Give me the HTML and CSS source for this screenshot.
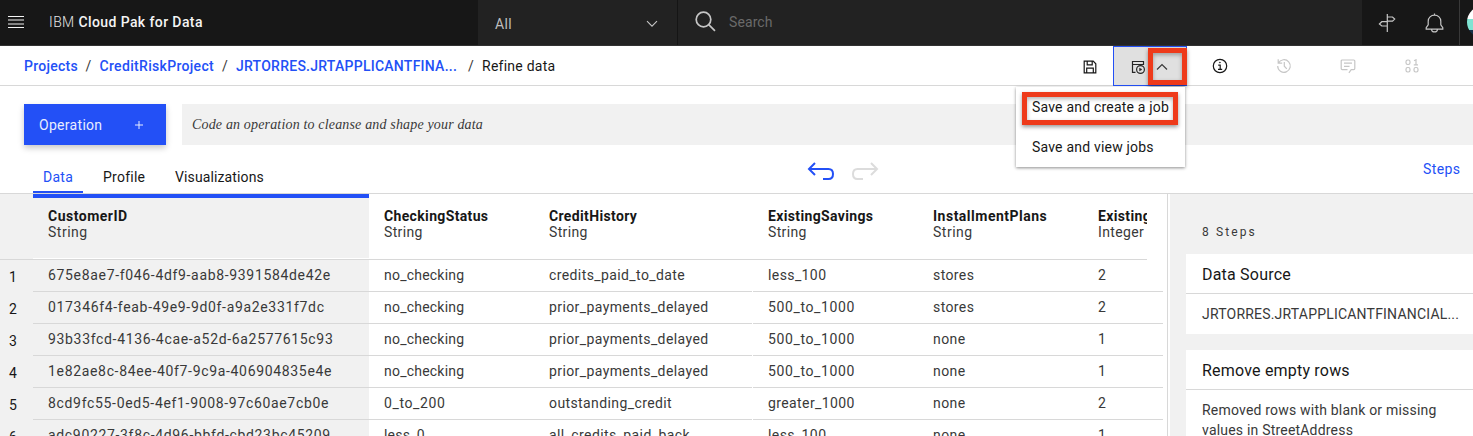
FILE: index.html
```html
<!DOCTYPE html>
<html lang="en">
<head>
<meta charset="utf-8">
<title>Refine data</title>
<link rel="stylesheet" href="styles.css">
</head>
<body>
<header class="topbar">
  <div class="brand">
    <svg class="burger" width="16" height="12" viewBox="0 0 16 12"><path d="M0 .5h16M0 11.5h16" stroke="#f4f4f4"/><path d="M0 4h16M0 8h16" stroke="#a8a8a8" stroke-width="1.4"/></svg>
    <span class="brand-name">IBM <b>Cloud Pak for Data</b></span>
  </div>
  <div class="scope">
    <span class="scope-label">All</span>
    <svg width="12" height="8" viewBox="0 0 12 8" fill="none" stroke="#c6c6c6" stroke-width="1.1"><path d="M1 1.2l5 5 5-5"/></svg>
  </div>
  <div class="search">
    <svg width="21" height="21" viewBox="0 0 21 21" fill="none" stroke="#c6c6c6" stroke-width="1.7"><circle cx="8.5" cy="8.5" r="7.3"/><path d="M13.7 13.7l6.3 6.1"/></svg>
    <span class="search-hint">Search</span>
  </div>
  <div class="tools">
    <svg width="18" height="20" viewBox="0 0 18 20" fill="none" stroke="#c6c6c6" stroke-width="1.2"><path d="M9.3 1v18M9.3 4h5.2l2.2 2.1-2.2 2.1H9.3M9.3 8.7H3.8L1.4 11l2.4 2h5.5"/></svg>
    <svg width="19" height="20" viewBox="0 0 19 20" fill="none" stroke="#c6c6c6" stroke-width="1.2"><path d="M1.2 16.2v-1.6l2-2.8V8.2c0-3.6 2.8-6 6.3-6s6.3 2.4 6.3 6v3.6l2 2.8v1.6zM9.5 2.2V.5M6.600 16.400a2.900 2.500 0 0 0 5.800 0"/></svg>
  </div>
  <div class="account"><span class="avatar"></span></div>
</header>

<nav class="crumbs">
  <div class="trail">
    <a class="c1">Projects</a><i>/</i><a class="c2">CreditRiskProject</a><i>/</i><a class="c3">JRTORRES.JRTAPPLICANTFINA...</a><i class="last">/</i><span class="here">Refine data</span>
  </div>
  <div class="actions">
    <svg class="save" width="14" height="14" viewBox="0 0 14 14" fill="none" stroke="#171717" stroke-width="1.2"><path d="M1.200 1.200h9l2.600 2.600v9H1.200zM4.200 1.200v3.600h5V1.200M3.700 12.800V8.200h6.600v4.600"/></svg>
    <div class="run">
      <svg width="14" height="14" viewBox="0 0 14 14" fill="none" stroke="#262626" stroke-width="1.2"><path d="M4.500 12.400H1.500V1.500h11v3.500M1.500 4.500h11"/><circle cx="9.500" cy="9.500" r="3.900"/><path d="M8.500 8v3l2.500-1.500z" fill="#262626" stroke-width=".4"/></svg>
      <div class="caret mark">
        <svg width="12" height="8" viewBox="0 0 12 8" fill="none" stroke="#393939" stroke-width="1.2"><path d="M1 6.500l5-5 5 5"/></svg>
      </div>
      <div class="menu">
        <div class="menu-item mark"><span>Save and create a job</span></div>
        <div class="menu-item"><span>Save and view jobs</span></div>
      </div>
    </div>
    <svg class="info" width="16" height="16" viewBox="0 0 16 16" fill="none" stroke="#171717" stroke-width="1.2"><circle cx="8" cy="8" r="6.700"/><path d="M6.200 7.200h2v4M6 11.400h4.200"/><circle cx="7.900" cy="4.500" r=".5" fill="#171717" stroke-width=".6"/></svg>
    <svg class="history" width="16" height="16" viewBox="0 0 16 16" fill="none" stroke="#c6c6c6" stroke-width="1.2"><path d="M2.200 1.200v4h4M2.400 5.100A6.300 6.300 0 1 1 1.700 8M8.300 4v4.200l2.500 2.700"/></svg>
    <svg class="comment" width="16" height="16" viewBox="0 0 16 16" fill="none" stroke="#c6c6c6" stroke-width="1.2"><path d="M7.500 11.600H2.200a1 1 0 0 1-1-1V3a1 1 0 0 1 1-1h11.600a1 1 0 0 1 1 1v7.600a1 1 0 0 1-1 1h-2.600l-2.300 3.200M4 5.200h8M4 8.300h5.500"/></svg>
    <svg class="bits" width="14" height="14" viewBox="0 0 14 14" fill="none" stroke="#c6c6c6" stroke-width="1.2"><rect x="1" y="1" width="4" height="4.500" rx="1.700"/><path d="M9 1.800l2-1v5M8.800 5.800H13"/><rect x="1" y="8.500" width="4" height="4.500" rx="1.700"/><rect x="9" y="8.500" width="4" height="4.500" rx="1.700"/></svg>
  </div>
</nav>

<section class="command">
  <button class="operation"><span>Operation</span><svg width="8" height="8" viewBox="0 0 8 8" stroke="#e8edff"><path d="M4 0v8M0 4h8"/></svg></button>
  <div class="code">Code an operation to cleanse and shape your data</div>
</section>

<section class="tabs">
  <span class="tab active">Data</span><span class="tab profile">Profile</span><span class="tab visual">Visualizations</span>
  <div class="undo">
    <svg width="28" height="19" viewBox="0 0 28 19" fill="none" stroke="#2350f6" stroke-width="2"><path d="M8 1L2 7l6 6M2 7h19.500q4.500 0 4.500 5t-4.500 5H16"/></svg>
    <svg width="28" height="19" viewBox="0 0 28 19" fill="none" stroke="#dcdcdc" stroke-width="2"><path d="M20 1l6 6-6 6M26 7H6.500Q2 7 2 12t4.500 5H12"/></svg>
  </div>
  <span class="steps-link">Steps</span>
</section>

<main class="work">
  <div class="grid">
    <div class="nums"><div class="corner"></div><div>1</div><div>2</div><div>3</div><div>4</div><div>5</div><div>6</div></div>
    <div class="col customer"><div class="head"><b>CustomerID</b><em>String</em></div><div>675e8ae7-f046-4df9-aab8-9391584de42e</div><div>017346f4-feab-49e9-9d0f-a9a2e331f7dc</div><div>93b33fcd-4136-4cae-a52d-6a2577615c93</div><div>1e82ae8c-84ee-40f7-9c9a-406904835e4e</div><div>8cd9fc55-0ed5-4ef1-9008-97c60ae7cb0e</div><div>adc90227-3f8c-4d96-bbfd-cbd23bc45209</div></div>
    <div class="col checking"><div class="head"><b>CheckingStatus</b><em>String</em></div><div>no_checking</div><div>no_checking</div><div>no_checking</div><div>no_checking</div><div class="digits">0_to_200</div><div>less_0</div></div>
    <div class="col credit"><div class="head"><b>CreditHistory</b><em>String</em></div><div>credits_paid_to_date</div><div>prior_payments_delayed</div><div>prior_payments_delayed</div><div>prior_payments_delayed</div><div>outstanding_credit</div><div>all_credits_paid_back</div></div>
    <div class="col savings"><div class="head"><b>ExistingSavings</b><em>String</em></div><div>less_100</div><div class="digits">500_to_1000</div><div class="digits">500_to_1000</div><div class="digits">500_to_1000</div><div>greater_1000</div><div>less_100</div></div>
    <div class="col plans"><div class="head"><b>InstallmentPlans</b><em>String</em></div><div>stores</div><div>stores</div><div>none</div><div>none</div><div>none</div><div>none</div></div>
    <div class="col existing"><div class="head"><b>Existing</b><em>Integer</em></div><div>2</div><div>2</div><div>1</div><div>1</div><div>2</div><div>1</div></div>
  </div>
  <aside class="steps">
    <div class="count">8 Steps</div>
    <div class="card"><h3>Data Source</h3><p>JRTORRES.JRTAPPLICANTFINANCIAL...</p></div>
    <div class="card"><h3>Remove empty rows</h3><p>Removed rows with blank or missing<br>values in StreetAddress</p></div>
  </aside>
</main>
</body>
</html>
```

FILE: styles.css
```css
* { box-sizing: border-box; }
body { margin: 0; width: 1473px; height: 436px; overflow: hidden; display: flex; flex-direction: column; background: #fff; color: #171717; font: 14px/16px Roboto, "Liberation Sans", sans-serif; letter-spacing: .4px; white-space: nowrap; }
svg { display: block; flex: none; }

.topbar { flex: 0 0 46px; display: flex; background: #171717; border-bottom: 1px solid #323232; }
.brand { width: 478px; display: flex; align-items: center; padding: 0 0 1px 8px; gap: 25px; color: #e4e4e4; }
.brand b { font-weight: 500; color: #f4f4f4; }
.brand-name { font-weight: 300; letter-spacing: .4px; }
.scope { width: 199px; display: flex; align-items: center; justify-content: space-between; padding: 2px 19px 0 17px; background: #222; color: #bebebe; }
.search { width: 685px; display: flex; align-items: center; gap: 13px; padding-left: 17px; background: #222; border-left: 1px solid #151515; color: #6a6a6a; letter-spacing: .1px; }
.search svg { margin-top: -2px; }
.search-hint { margin-top: -1px; }
.tools { width: 97px; display: flex; align-items: center; gap: 29px; padding-left: 16px; }
.account { flex: 1; border-left: 1px solid #393939; overflow: hidden; padding: 6px 0 0 7px; }
.avatar { display: block; width: 32px; height: 32px; border-radius: 50%; background: linear-gradient(#fff 42%, #7fe3d2 42% 76%, #16324a 76%); }

.crumbs { flex: 0 0 40px; display: flex; align-items: center; justify-content: space-between; border-bottom: 1px solid #d8d8d8; padding-left: 24px; }
.trail { display: flex; align-items: center; color: #171717; padding-top: 1px; letter-spacing: .25px; }
.trail a { color: #2350f6; font-weight: 500; }
.trail i { font-style: normal; color: #393939; width: 22px; padding-left: 8px; }
.trail .last { width: 25px; padding-left: 11px; }
.c1 { width: 53.5px; }
.c2 { width: 114.5px; letter-spacing: .32px; }
.c3 { width: 221px; }
.actions { display: flex; align-items: center; align-self: stretch; width: 390px; height: 39px; }
.actions > svg { margin-top: 1px; }
.actions > .save { margin-right: 16px; margin-top: 3px; }
.run { position: relative; width: 74px; height: 40px; margin-bottom: -1px; display: flex; align-items: center; justify-content: space-between; padding-left: 17px; background: #e0e0e0; border: 1px solid #2350f6; margin-right: 25px; }
.run > svg { margin-top: 2px; }
.mark { border: 5px solid #ee3a1a; box-shadow: 0 2px 4px rgba(0,0,0,.4), inset 0 2px 4px rgba(0,0,0,.3); }
.caret { width: 39px; height: 37px; margin-right: -1px; display: flex; align-items: center; padding-left: 3px; }
.caret svg { margin-top: 2px; }
.menu { position: absolute; left: -98px; top: 40px; width: 169px; height: 80px; background: #fff; box-shadow: 0 1px 3px rgba(0,0,0,.45); padding: 5px 6px; z-index: 2; letter-spacing: .2px; }
.menu-item { width: 156px; height: 33px; display: flex; align-items: center; padding-left: 10px; }
.menu-item.mark { padding: 0 0 3px 5px; }
.menu-item + .menu-item { margin-top: 5px; }
.history { margin-left: 48px; }
.comment { margin-left: 48px; }
.bits { margin-left: 49px; }

.command { display: flex; gap: 16px; padding: 18px 0 0 24px; height: 77px; flex: none; }
.operation { width: 142px; height: 41px; border: 0; display: flex; align-items: center; justify-content: space-between; padding: 1px 23px 0 15px; background: #2350f6; color: #e8edff; font: inherit; letter-spacing: .3px; box-shadow: 0 3px 6px rgba(0,0,0,.22); }
.code { flex: 1; height: 41px; background: #f1f1f1; padding: 13px 10px; color: #393939; font: italic 14px/16px "Liberation Serif", serif; letter-spacing: .165px; }

.tabs { flex: 0 0 31px; height: 31px; display: flex; padding-left: 33px; border-bottom: 1px solid #d8d8d8; }
.tab { width: 50px; height: 30px; padding: 6px 0 0 10px; letter-spacing: .25px; }
.tab.active { color: #2350f6; border-bottom: 2px solid #2350f6; }
.profile { margin-left: 10px; width: 82px; }
.visual { width: 100px; padding-left: 0; letter-spacing: .12px; }
.undo { display: flex; gap: 16px; margin: -1px 0 0 532px; }
.steps-link { margin: -2px 0 0 544px; color: #2350f6; }

.work { flex: 1; min-height: 0; display: flex; overflow: hidden; }
.grid { width: 1168px; display: flex; border-right: 1px solid #d8d8d8; color: #393939; }
.nums { width: 33px; background: #f1f1f1; color: #171717; }
.nums > div { height: 32px; padding: 9px 0 0 9px; }
.nums .corner { height: 66px; border-bottom: 1px solid #d8d8d8; padding: 0; }
.col { width: 165px; }
.col > div { height: 32px; padding: 7px 0 0 15px; border-bottom: 1px solid #d8d8d8; overflow: hidden; }
.col > .head { height: 66px; padding-top: 14px; letter-spacing: .35px; }
.head b, .head em { display: block; font-style: normal; }
.head b { color: #171717; font-weight: 700; }
.customer { width: 336px; background: #f1f1f1; letter-spacing: .67px; }
.customer > .head { border-top: 4px solid #2350f6; padding-top: 10px; box-shadow: inset 0 -1px #fff; letter-spacing: .5px; }
.checking { letter-spacing: .22px; }
.col > .digits { letter-spacing: .62px; }
.credit { width: 219px; }
.credit > div:not(.head) { margin-right: 1px; }
.plans > .head { letter-spacing: .5px; }
.existing { width: 80px; }
.existing > .head { width: 64px; }

.steps { width: 303px; margin-left: 2px; padding: 30px 0 0 16px; background: #f1f1f1; color: #393939; letter-spacing: .2px; }
.count { height: 30px; padding-left: 16px; font-size: 12px; letter-spacing: 2.1px; }
.card { background: #fff; min-height: 80px; margin-bottom: 16px; }
.card h3 { margin: 0; height: 40px; border-bottom: 1px solid #d8d8d8; padding: 12px 16px 0; font-size: 16px; line-height: 18px; font-weight: 400; color: #171717; }
.card p { margin: 0; padding: 10px 16px; line-height: 20px; }
```
